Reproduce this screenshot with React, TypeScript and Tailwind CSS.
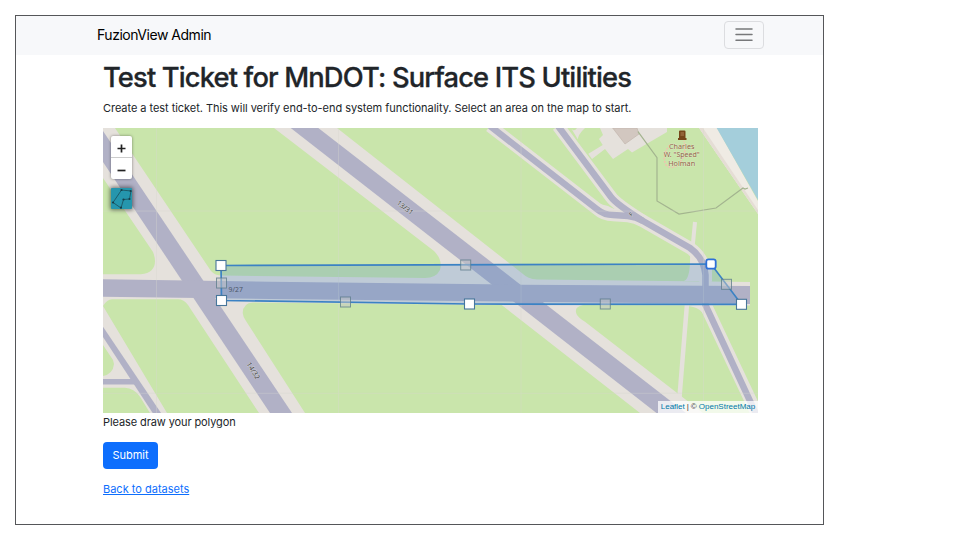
const GREEN = '#c9e5ab';
const APRON = '#e5e1dc';
const ROAD = '#b1b1c6';

const vertices = [
  [221, 265.5],
  [741.5, 304.3],
  [469.5, 304],
  [221.5, 300.5],
];
const midpoints = [
  [465.7, 265],
  [726.5, 284.3],
  [605.3, 304],
  [345.5, 302],
  [221.5, 283],
];

function MapTiles() {
  return (
    <svg className="block h-full w-full" viewBox="103 128 655 285" preserveAspectRatio="none">
      <rect x="103" y="128" width="655" height="285" fill={GREEN} />

      {/* runway aprons */}
      <g fill={APRON}>
        <path d="M103 128H115L211 271Q215 275.5 222 275.5L425 278Q436 278 440 270Q443 260 434 251L274 128H337L521.7 273Q528 279 537 279.5L750 282V305.5L583 305Q573 307 577 315Q579 318 585 321.7L703 413H640L501.7 305L253 302.5Q243 303 242.7 313Q243 317 246 321L305 413H259L188 305Q184 299.3 178 299.3H112Q107 299.5 103 306V274.3H141Q155 273 155 261Q155 257 153 252L103 178Z" />
        <path d="M103 306L167 413H150L140 396.7Q134 388 125 387.7H103V376Q113 374 114 364L113 360L103 345Z" />
      </g>
      <path d="M695 222L692.5 248" stroke={APRON} strokeWidth="4" />
      <path d="M687 304L679.5 397" stroke={APRON} strokeWidth="4.5" />
      <path d="M684 306Q701 305 707 320L710 304ZM690 250Q691 279 684 281H712V265Z" fill={APRON} />

      {/* parking areas and building */}
      <path d="M571 128H667V132L632 152.500L628 149L613 159L605 149L592 159L577 138Z" fill={APRON} />
      <path d="M585 128H600L603 135L599 139L602.7 145L588 154L578 141Q577 135 585 128ZM570 128H577Q575 131 573 130Z" fill={GREEN} />
      <path d="M612.7 128H637L639 134L625 144Z" fill="#d2c7c0" stroke="#c3b6ae" strokeWidth=".7" />

      {/* taxiways */}
      <g fill="none" stroke={APRON} strokeWidth="12.500">
        <path d="M490 126L596.700 208.500Q604 215 613 215L628 216Q636 217 643 221L690 248Q704 258 705.500 275V305L758 416" />
        <path d="M558 126L611 197Q616 204 643 221" />
      </g>
      <path d="M596 203L608 206L618 211L608 213Z" fill={APRON} />
      <g fill="none" stroke={ROAD} strokeWidth="6.500">
        <path d="M490 126L596.700 209Q604 215 613 215L628 216Q636 217 643 221L690 248Q704 258 705.500 275V305L757 416" />
        <path d="M558 126L611 197Q616 204 643 221" />
        <path d="M103 381.700H137" strokeWidth="5.500" />
      </g>
      <path d="M103 326.700V337L152.700 413H161Z" fill={ROAD} />

      {/* runways */}
      <g fill={ROAD}>
        <path d="M103 131V162L270 413H292Z" />
        <path d="M290.700 128H318.300L686 413H656.500Z" />
        <path d="M103 279.300L270 281.700L520 284.700L750 286V304L520 301.700L270 299L103 296.700Z" />
      </g>

      {/* shoreline */}
      <path d="M699 128H717L758 201V214Z" fill="#efebe4" />
      <path d="M699 128H703L758 210V214Z" fill="#e5ddd5" />
      <path d="M716.700 128H758V200Z" fill="#a4cedb" />
      <path d="M638 131.700L657 157.700V201L679 214L716 208L743 188L745 189L748 188" fill="none" stroke="#a3b48f" strokeWidth="1.200" />
      <path d="M670 145Q661 155 666 165Q673 171 680 162Q687 154 684 141" fill="none" stroke="#f3bfae" strokeWidth="1.500" strokeDasharray="2 1.500" />

      {/* tile seams */}
      <path d="M156.500 128V413M338.500 128V413M521 128V413M703.500 128V413M103 211H758M103 393.300H758" stroke="#d8d8d0" strokeWidth=".7" opacity=".5" />

      {/* memorial */}
      <path d="M679 131.500Q679 130.500 680 130.500H684.500Q685.500 130.500 685.500 131.500V138H679ZM678 138H686.500V140H678Z" fill="#754719" />
      <path d="M680.500 133H684M680.500 135H684" stroke="#c69b6d" strokeWidth=".7" />
      <g fontFamily="'Noto Sans', sans-serif" fontSize="7.200" textAnchor="middle" fill="#8f6243" stroke="#e4edcf" strokeWidth=".7" paintOrder="stroke">
        <text x="681.700" y="148.700" textLength="25.500" lengthAdjust="spacingAndGlyphs">Charles</text>
        <text x="681.700" y="157.300" textLength="36" lengthAdjust="spacingAndGlyphs">W. "Speed"</text>
        <text x="681.700" y="165.800" textLength="27" lengthAdjust="spacingAndGlyphs">Holman</text>
      </g>

      <g fontFamily="'Noto Sans', sans-serif" fontSize="7" textAnchor="middle" fill="#444" stroke="#d0d0d6" strokeWidth=".8" paintOrder="stroke">
        <text transform="translate(403.500 209.500) rotate(38)">13/31</text>
        <text transform="translate(251.300 372) rotate(58)">14/32</text>
        <text transform="translate(632.500 216) rotate(-45)" fontSize="6">F</text>
      </g>

      <path d="M221 265.500L711 264L741.500 304.300L469.500 304L221.500 300.500Z" fill="#3a80c8" fillOpacity=".22" stroke="#3b82c4" strokeWidth="1.700" />
      <text x="235.700" y="291.800" fontFamily="'Noto Sans', sans-serif" fontSize="6.800" textAnchor="middle" fill="#4c5668">9/27</text>

      {midpoints.map(([x, y]) => (
        <rect key={`m${x}`} x={x - 5} y={y - 5} width="10" height="10" fill="#c8c8c8" fillOpacity=".5" stroke="#587a88" strokeOpacity=".75" />
      ))}
      {vertices.map(([x, y]) => (
        <rect key={`v${x}`} x={x - 5} y={y - 5} width="10" height="10" fill="#fff" stroke="#47769b" strokeWidth="1.100" />
      ))}
      <rect x="706.300" y="259.300" width="9.400" height="9.400" rx="2.200" fill="#fff" stroke="#2d6fd8" strokeWidth="1.800" />
    </svg>
  );
}

export default function App() {
  return (
    <div className="h-[540px] w-[960px] overflow-hidden bg-white pt-[15px] pl-[15px] font-['Inter',sans-serif] text-[#212529]">
      <div className="h-[510px] w-[809px] border border-[#555659] bg-white">
        <nav className="flex h-[39px] items-center justify-between bg-[#f7f8fa] pr-[59px] pb-[2px] pl-[81px]">
          <span className="text-[14px] leading-5 tracking-[-0.47px] text-black">FuzionView Admin</span>
          <button aria-label="Toggle navigation" className="flex h-[28px] w-[40px] items-center justify-center rounded-[4px] border border-[#dcdde0]">
            <svg className="h-[15px] w-[18px]" viewBox="0 0 18 15" fill="none" stroke="#77787a" strokeWidth="1.500" strokeLinecap="round">
              <path d="M1 2H17M1 7.500H17M1 13.200H17" />
            </svg>
          </button>
        </nav>
        <main className="pl-[87px]">
          <h1 className="pt-[6px] text-[27.3px] leading-[34px] font-medium tracking-[-0.84px] whitespace-nowrap [-webkit-text-stroke:0.3px_#212529]">Test Ticket for MnDOT: Surface ITS Utilities</h1>
          <p className="mt-[4px] text-[11px] leading-[18px] tracking-[-0.048px] whitespace-nowrap">Create a test ticket. This will verify end-to-end system functionality. Select an area on the map to start.</p>
          <div className="relative mt-[11px] h-[285px] w-[655px] overflow-hidden">
            <MapTiles />
            <div className="absolute top-[8px] left-[8px] flex w-[21px] flex-col rounded-[2px] bg-white shadow-[0_0_3px_rgba(0,0,0,0.45)]">
              <button aria-label="Zoom in" className="flex h-[22px] items-center justify-center border-b border-[#ccc] pt-[4px]">
                <svg className="h-[9px] w-[9px]" viewBox="0 0 9 9" stroke="#222" strokeWidth="1.700"><path d="M.5 4.500H8.500M4.500 .5V8.500" /></svg>
              </button>
              <button aria-label="Zoom out" className="flex h-[21px] items-center justify-center pt-[4px]">
                <svg className="h-[9px] w-[9px]" viewBox="0 0 9 9" stroke="#222" strokeWidth="1.700"><path d="M.5 4.500H8.500" /></svg>
              </button>
            </div>
            <button aria-label="Draw polygon" className="absolute top-[60px] left-[8px] h-[21px] w-[21px] rounded-[1px] bg-[#2596ad] shadow-[0_0_4px_1px_rgba(0,0,0,0.5)]">
              <svg className="h-[21px] w-[21px]" viewBox="0 0 21 21" fill="none" stroke="#1b4c58" strokeWidth=".8">
                <path d="M10.500 2L20 3L18.500 11L12.500 11.500L10 20L2 14.500Z" />
                <g fill="#173e49" stroke="none">
                  <circle cx="10.500" cy="2" r="1.100" /><circle cx="19.700" cy="3" r="1.100" /><circle cx="18.500" cy="11" r="1.100" />
                  <circle cx="12.500" cy="11.500" r="1.100" /><circle cx="10" cy="19.700" r="1.100" /><circle cx="2" cy="14.500" r="1.100" />
                </g>
              </svg>
            </button>
            <div className="absolute right-0 bottom-0 flex h-[12px] w-[100px] items-center justify-center gap-[2px] bg-white/75 font-['Liberation_Sans',sans-serif] text-[8px] leading-[12px] whitespace-nowrap text-[#333]">
              <span className="text-[#0078a8]">Leaflet</span>
              <span>|</span>
              <span>©</span>
              <span className="text-[#0078a8]">OpenStreetMap</span>
            </div>
          </div>
          <p className="text-[11px] leading-[18px] tracking-[-0.1px]">Please draw your polygon</p>
          <button className="mt-[11px] flex h-[27px] w-[55px] items-center justify-center rounded-[4px] bg-[#0d6efd] text-[11px] text-white">Submit</button>
          <a href="#" className="mt-[11px] block text-[11px] leading-[18px] text-[#0d6efd] underline">Back to datasets</a>
        </main>
      </div>
    </div>
  );
}
